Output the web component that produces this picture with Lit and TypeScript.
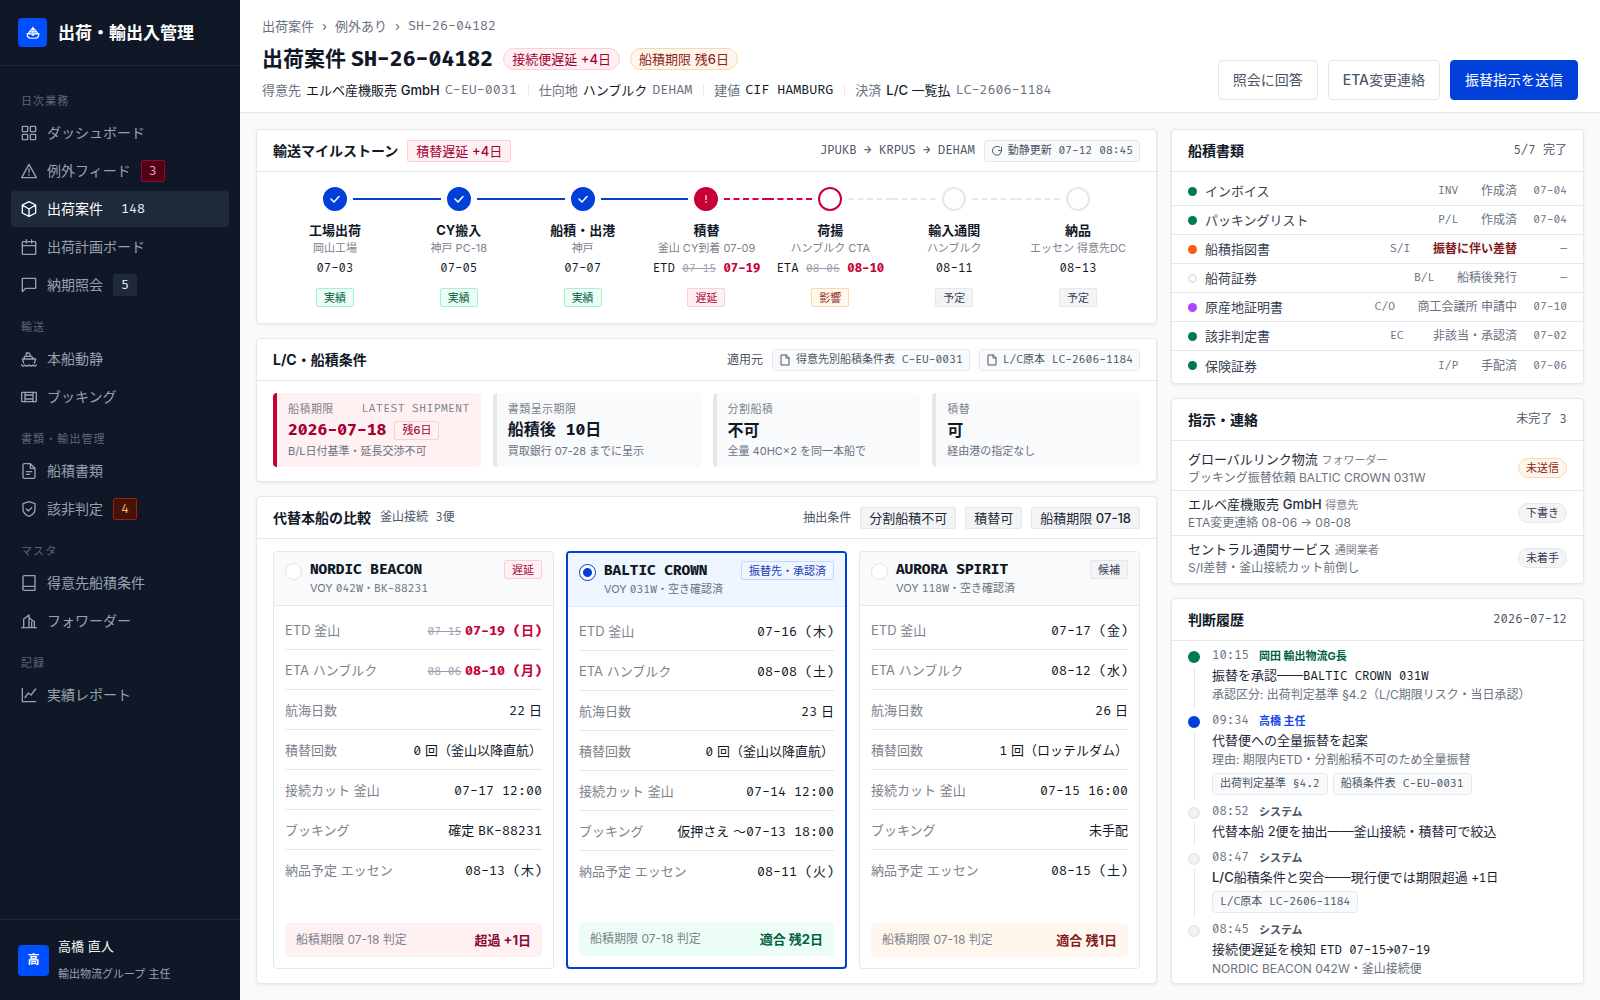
import { LitElement, html, css, svg, nothing, type TemplateResult } from "lit";
import { customElement, state } from "lit/decorators.js";
import { classMap } from "lit/directives/class-map.js";

const icons: Record<string, TemplateResult> = {
  brand: svg`<path d="M12 2v14M12 3 5 11v3M12 3l7 8v3M2 13h6l4 3 4-3h6c0 5-2 8-6 8H8c-4 0-6-3-6-8zM6 10h12"/>`,
  grid: svg`<rect x="2" y="2" width="8" height="8" rx="1"/><rect x="14" y="2" width="8" height="8" rx="1"/><rect x="2" y="14" width="8" height="8" rx="1"/><rect x="14" y="14" width="8" height="8" rx="1"/>`,
  alert: svg`<path d="M12 2 1 22h22zM12 9v5M12 17v1"/>`,
  box: svg`<path d="m12 1 10 5v12l-10 5-10-5V6zM2 6l10 6 10-6M12 12v11"/>`,
  calendar: svg`<rect x="2" y="4" width="20" height="19" rx="1"/><path d="M2 10h20M8 1v5M16 1v5"/>`,
  message: svg`<path d="M22 2H2v20l5-5h15z"/>`,
  ship: svg`<path d="M1 21c2 2 4 2 5 0 2 2 4 2 6 0 2 2 4 2 6 0 1 2 3 2 5 0M4 18l-2-6h20l-2 6M5 12V8h10l5 4M8 8V3h4l3 5"/>`,
  container: svg`<rect x="1" y="5" width="22" height="14" rx="1"/><path d="M6 5v14M18 5v14M6 9h12M6 15h12"/>`,
  file: svg`<path d="M14 1H5a2 2 0 0 0-2 2v18a2 2 0 0 0 2 2h14a2 2 0 0 0 2-2V8zM14 1v7h7M8 13h8M8 17h5"/>`,
  shield: svg`<path d="m12 1 9 3v8c0 5-4 9-9 11-5-2-9-6-9-11V4z"/><path d="m8 12 3 3 5-5"/>`,
  book: svg`<path d="M3 20V3a2 2 0 0 1 2-2h16v22H5a2 2 0 0 1-2-3 2 2 0 0 1 2-3h16"/>`,
  building: svg`<path d="M1 22h22M4 22V9l8-6v19M12 7l8 6v9M16 13v9"/>`,
  chart: svg`<path d="M2 2v20h20M6 16l5-7 4 3 7-9"/>`,
  doc: svg`<path d="M14 2H4v20h16V8zM14 2v6h6"/>`,
  refresh: svg`<path d="M21 4v7h-6"/><path d="M17 4a9 9 0 1 0 4 7"/>`,
  check: svg`<path d="m4 12 6 6L20 7"/>`,
  bang: svg`<path d="M12 4v9M12 19v1"/>`,
};

const icon = (name: string) => html`<svg class="ic" viewBox="0 0 24 24" aria-hidden="true">${icons[name]}</svg>`;

/** Sets the Latin runs of a Japanese string one step heavier than the kana and kanji. */
const mixed = (text: string) =>
  text.split(/([!-~][ -~]*)/).map((part, i) => (i % 2 ? html`<span class="latin">${part}</span>` : part));

const m = (t: string) => html`<span class="mono">${t}</span>`;

const base = css`
  *, *::before, *::after { box-sizing: border-box; }
  :host {
    --sans: Inter, "Noto Sans CJK JP", sans-serif;
    --mono: "Fira Code", "DejaVu Sans Mono", "Noto Sans CJK JP", monospace;
    --ink: #101828;
    --text: #1e2939;
    --sub: #4a5565;
    --muted: #6a7282;
    --faint: #7d828c;
    --line: #e5e7eb;
    --soft: #f9fafb;
    --blue: #003fd8;
    --red: #c70036;
    font-family: var(--sans);
    line-height: 20px;
  }
  h1, h2, h3, p, ul, ol, dl, dd, dt { margin: 0; padding: 0; font-weight: inherit; }
  ul, ol { list-style: none; }
  .mono { font-family: var(--mono); font-variant-ligatures: none; }
  .latin { font-weight: 500; }
  h1 .mono, p .mono, dd .mono, p .role, .date .old, .date .new, .voy .mono { line-height: 1; }
  .ic { width: 16px; height: 16px; flex: none; fill: none; stroke: currentColor; stroke-width: 2; stroke-linecap: round; stroke-linejoin: round; }
  .tag {
    display: inline-flex; align-items: center; height: 19px; padding: 0 7px;
    border: 1px solid var(--line); border-radius: 2px; background: #f3f4f6;
    color: #364153; font-size: 11px; line-height: 16px; white-space: pre;
  }
  .tag.big { height: 22px; padding: 0 8px; font-size: 13px; color: var(--text); }
  .tag.pill { border-radius: 11px; height: 20px; }
  .tag.pill.big { height: 22px; }
  .tag.rose { background: #fff1f2; border-color: #ffccd3; color: #a50036; }
  .tag.orange { background: #fff7ed; border-color: #ffd6a7; color: #8f2420; }
  .tag.green { background: #ecfdf5; border-color: #a4f4cf; color: #006045; }
  .tag.blue { background: #eff6ff; border-color: #bedbff; color: #193cb8; }
  .old { color: #99a1af; text-decoration: line-through; font-size: 11px; font-weight: 400; }
  .new { color: var(--red); font-weight: 700; }
`;

type NavItem = [string, string, string?, string?];
const NAV: [string, NavItem[]][] = [
  ["日次業務", [["grid", "ダッシュボード"], ["alert", "例外フィード", "3", "rose"], ["box", "出荷案件", "148"], ["calendar", "出荷計画ボード"], ["message", "納期照会", "5"]]],
  ["輸送", [["ship", "本船動静"], ["container", "ブッキング"]]],
  ["書類・輸出管理", [["file", "船積書類"], ["shield", "該非判定", "4", "orange"]]],
  ["マスタ", [["book", "得意先船積条件"], ["building", "フォワーダー"]]],
  ["記録", [["chart", "実績レポート"]]],
];

@customElement("side-nav")
export class SideNav extends LitElement {
  static styles = [base, css`
    :host { display: flex; flex-direction: column; background: var(--ink); color: #99a1af; }
    .brand { display: flex; align-items: center; gap: 11px; height: 66px; padding: 0 18px; border-bottom: 1px solid #1e2939; color: #fff; font-size: 17px; font-weight: 700; }
    .mark { display: grid; place-items: center; width: 29px; height: 29px; border-radius: 4px; background: #004fff; }
    .mark .ic { width: 14px; height: 14px; }
    nav { flex: 1; padding: 11px; }
    h2 { padding: 16px 10px 6px; font-size: 11px; line-height: 16px; letter-spacing: 0.1em; color: #5d6676; }
    ul { display: grid; gap: 2px; }
    a { display: flex; align-items: center; gap: 10px; height: 36px; padding: 0 10px; border-radius: 4px; color: inherit; text-decoration: none; font-size: 14px; }
    a.on { background: #1e2939; color: #fff; }
    .count { display: inline-flex; align-items: center; height: 22px; padding: 0 7px; border: 1px solid #1e2939; border-radius: 2px; background: #1e2939; color: #f3f4f6; font-size: 13px; }
    .count.rose { background: #4d0218; border-color: #a50036; color: #ffa1ad; }
    .count.orange { background: #441306; border-color: #9f1d12; color: #ffb86a; }
    .user { display: flex; align-items: center; gap: 9px; height: 81px; padding: 0 18px; border-top: 1px solid #1e2939; }
    .avatar { display: grid; place-items: center; width: 31px; height: 31px; border-radius: 4px; background: #004fff; color: #fff; font-size: 12px; font-weight: 700; }
    .name { color: #f3f4f6; font-size: 13px; line-height: 28px; }
    .role { font-size: 11px; line-height: 28px; }
  `];
  render() {
    return html`
      <div class="brand"><span class="mark">${icon("brand")}</span>出荷・輸出入管理</div>
      <nav aria-label="メイン">
        ${NAV.map(([title, items]) => html`
          <h2>${title}</h2>
          <ul>${items.map(([ic, label, count, tone]) => html`
            <li><a href="#" class=${classMap({ on: label === "出荷案件" })}>${icon(ic)}<span>${label}</span>
              ${count ? html`<span class="count mono ${tone ?? ""}">${count}</span>` : nothing}</a></li>`)}
          </ul>`)}
      </nav>
      <div class="user"><span class="avatar">高</span><div><p class="name">高橋 直人</p><p class="role">輸出物流グループ 主任</p></div></div>`;
  }
}

@customElement("case-header")
export class CaseHeader extends LitElement {
  static styles = [base, css`
    :host { display: flex; align-items: flex-end; justify-content: space-between; gap: 22px; padding: 16px 22px 12px; background: #fff; border-bottom: 1px solid var(--line); box-shadow: 0 1px 0 #f3f4f6; }
    .crumbs { display: flex; gap: 8px; font-size: 13px; color: var(--muted); }
    .crumbs a { color: inherit; text-decoration: none; }
    .title { display: flex; align-items: center; gap: 10px; margin-top: 8px; }
    h1 { font-size: 21px; line-height: 30px; font-weight: 700; color: var(--ink); }
    .meta { display: flex; align-items: center; margin-top: 6px; font-size: 13px; color: var(--muted); }
    .meta div { display: flex; gap: 5px; }
    .meta div + div { margin-left: 11px; }
    .meta div + div::before { content: ""; align-self: center; width: 1px; height: 10px; margin-right: 5px; background: var(--line); }
    .meta b { font-weight: 400; color: var(--ink); white-space: pre; }
    .actions { display: flex; gap: 10px; }
    button { height: 40px; padding: 0 14px; border: 1px solid var(--line); border-radius: 4px; background: #fff; color: var(--sub); font: 400 14px/20px var(--sans); white-space: nowrap; cursor: pointer; }
    button.primary { background: var(--blue); border-color: var(--blue); color: #fff; }
  `];
  render() {
    return html`
      <div>
        <nav class="crumbs" aria-label="パンくず"><a href="#">出荷案件</a><span>›</span><a href="#">例外あり</a><span>›</span>${m("SH-26-04182")}</nav>
        <div class="title"><h1>出荷案件 ${m("SH-26-04182")}</h1><span class="tag pill big rose">${mixed("接続便遅延 +4日")}</span><span class="tag pill big orange">${mixed("船積期限 残6日")}</span></div>
        <div class="meta">
          <div>得意先 <b>${mixed("エルベ産機販売 GmbH")}</b>${m("C-EU-0031")}</div>
          <div>仕向地 <b>ハンブルク</b>${m("DEHAM")}</div>
          <div>建値 <b class="mono">CIF HAMBURG</b></div>
          <div>決済 <b>${mixed("L/C 一覧払")}</b>${m("LC-2606-1184")}</div>
        </div>
      </div>
      <div class="actions"><button>照会に回答</button><button>${mixed("ETA変更連絡")}</button><button class="primary">振替指示を送信</button></div>`;
  }
}

interface Stone { name: string; place: string; label?: string; old?: string; date: string; tag: string; tone: string; kind: string; line?: string }
const STONES: Stone[] = [
  { name: "工場出荷", place: "岡山工場", date: "07-03", tag: "実績", tone: "green", kind: "done", line: "solid" },
  { name: "CY搬入", place: "神戸 PC-18", date: "07-05", tag: "実績", tone: "green", kind: "done", line: "solid" },
  { name: "船積・出港", place: "神戸", date: "07-07", tag: "実績", tone: "green", kind: "done", line: "solid" },
  { name: "積替", place: "釜山 CY到着 07-09", label: "ETD", old: "07-15", date: "07-19", tag: "遅延", tone: "rose", kind: "late", line: "hot" },
  { name: "荷揚", place: "ハンブルク CTA", label: "ETA", old: "08-06", date: "08-10", tag: "影響", tone: "orange", kind: "hit", line: "dash" },
  { name: "輸入通関", place: "ハンブルク", date: "08-11", tag: "予定", tone: "", kind: "plan", line: "dash" },
  { name: "納品", place: "エッセン 得意先DC", date: "08-13", tag: "予定", tone: "", kind: "plan" },
];

interface Vessel { id: string; name: string; voy: string; note: TemplateResult | string; tag: string; tone: string; rows: [string, TemplateResult | string][]; verdict: string; vtone: string }
const late = (a: string, b: string) => html`<span class="old mono">${a}</span> <span class="new mono">${b}</span>`;
const VESSELS: Vessel[] = [
  { id: "nordic", name: "NORDIC BEACON", voy: "042W", note: m("BK-88231"), tag: "遅延", tone: "rose", verdict: "超過 +1日", vtone: "bad",
    rows: [["ETD 釜山", late("07-15", "07-19 (日)")], ["ETA ハンブルク", late("08-06", "08-10 (月)")], ["航海日数", html`${m("22")} 日`], ["積替回数", html`${m("0")} 回（釜山以降直航）`], ["接続カット 釜山", m("07-17 12:00")], ["ブッキング", html`確定 ${m("BK-88231")}`], ["納品予定 エッセン", m("08-13 (木)")]] },
  { id: "baltic", name: "BALTIC CROWN", voy: "031W", note: "空き確認済", tag: "振替先・承認済", tone: "blue", verdict: "適合 残2日", vtone: "good",
    rows: [["ETD 釜山", m("07-16 (木)")], ["ETA ハンブルク", m("08-08 (土)")], ["航海日数", html`${m("23")} 日`], ["積替回数", html`${m("0")} 回（釜山以降直航）`], ["接続カット 釜山", m("07-14 12:00")], ["ブッキング", html`仮押さえ 〜${m("07-13 18:00")}`], ["納品予定 エッセン", m("08-11 (火)")]] },
  { id: "aurora", name: "AURORA SPIRIT", voy: "118W", note: "空き確認済", tag: "候補", tone: "", verdict: "適合 残1日", vtone: "warn",
    rows: [["ETD 釜山", m("07-17 (金)")], ["ETA ハンブルク", m("08-12 (水)")], ["航海日数", html`${m("26")} 日`], ["積替回数", html`${m("1")} 回（ロッテルダム）`], ["接続カット 釜山", m("07-15 16:00")], ["ブッキング", "未手配"], ["納品予定 エッセン", m("08-15 (土)")]] },
];

const DOCS: [string, string, string, string, string][] = [
  ["ok", "インボイス", "INV", "作成済", "07-04"],
  ["ok", "パッキングリスト", "P/L", "作成済", "07-04"],
  ["swap", "船積指図書", "S/I", "振替に伴い差替", "—"],
  ["none", "船荷証券", "B/L", "船積後発行", "—"],
  ["wait", "原産地証明書", "C/O", "商工会議所 申請中", "07-10"],
  ["ok", "該非判定書", "EC", "非該当・承認済", "07-02"],
  ["ok", "保険証券", "I/P", "手配済", "07-06"],
];

const TASKS: [string, string, string, string, string][] = [
  ["グローバルリンク物流", "フォワーダー", "ブッキング振替依頼 BALTIC CROWN 031W", "未送信", "orange"],
  ["エルベ産機販売 GmbH", "得意先", "ETA変更連絡 08-06 → 08-08", "下書き", ""],
  ["セントラル通関サービス", "通関業者", "S/I差替・釜山接続カット前倒し", "未着手", ""],
];

interface Log { time: string; who: string; kind: string; title: TemplateResult | string; sub?: string; refs?: string[] }
const LOGS: Log[] = [
  { time: "10:15", who: "岡田 輸出物流G長", kind: "green", title: html`振替を承認――${m("BALTIC CROWN 031W")}`, sub: "承認区分: 出荷判定基準 §4.2（L/C期限リスク・当日承認）" },
  { time: "09:34", who: "高橋 主任", kind: "blue", title: "代替便への全量振替を起案", sub: "理由: 期限内ETD・分割船積不可のため全量振替", refs: ["出荷判定基準 §4.2", "船積条件表 C-EU-0031"] },
  { time: "08:52", who: "システム", kind: "auto", title: "代替本船 2便を抽出――釜山接続・積替可で絞込" },
  { time: "08:47", who: "システム", kind: "auto", title: html`${mixed("L/C船積条件と突合――現行便では期限超過")} ${m("+1日")}`, refs: ["L/C原本 LC-2606-1184"] },
  { time: "08:45", who: "システム", kind: "auto", title: html`接続便遅延を検知 ${m("ETD 07-15→07-19")}`, sub: "NORDIC BEACON 042W・釜山接続便" },
];

const card = css`
  :host { display: flex; flex-direction: column; border: 1px solid var(--line); border-radius: 4px; background: #fff; box-shadow: 0 1px 3px rgb(16 24 40 / 8%); }
  .head { display: flex; align-items: center; gap: 9px; height: 42px; padding: 0 16px; border-bottom: 1px solid var(--line); font-size: 12px; color: var(--sub); flex: none; }
  .head h2 { font-size: 14px; font-weight: 700; color: var(--ink); }
  .push { margin-left: auto; }
  .chip { display: inline-flex; align-items: center; gap: 5px; height: 22px; padding: 0 7px; border: 1px solid var(--line); border-radius: 4px; background: var(--soft); color: var(--sub); font: 400 11px/16px var(--mono); text-decoration: none; white-space: nowrap; cursor: pointer; }
  .chip .ic { width: 12px; height: 12px; }
  .head .chip { padding: 0 6px; }
`;

@customElement("milestone-card")
export class MilestoneCard extends LitElement {
  static styles = [base, card, css`
    ol { display: grid; grid-template-columns: repeat(7, minmax(0, 1fr)); padding: 15px 16px 16px; }
    li { display: flex; flex-direction: column; align-items: center; white-space: nowrap; }
    .track { display: grid; grid-template-columns: 1fr 24px 1fr; align-items: center; gap: 6px; width: 100%; }
    .rail { height: 0; border-top: 2px none var(--line); }
    .rail.solid { border-top: 2px solid var(--blue); }
    .rail.hot { border-top: 2px dashed #e0003f; }
    .rail.dash { border-top: 2px dashed var(--line); }
    .dot { display: grid; place-items: center; width: 24px; height: 24px; border-radius: 50%; border: 2px solid var(--line); color: #fff; background: #fff; }
    .dot .ic { width: 12px; height: 12px; stroke-width: 3; }
    .dot.done { background: var(--blue); border-color: var(--blue); }
    .dot.late { background: var(--red); border-color: var(--red); }
    .dot.late .ic { width: 10px; height: 10px; }
    .dot.hit { border-color: var(--red); }
    .name { margin-top: 9px; font-size: 13px; font-weight: 700; color: var(--ink); }
    .place { font-size: 11px; line-height: 16px; color: var(--faint); }
    .date { margin: 3px 0 9px; font-size: 12px; color: var(--ink); }
  `];
  render() {
    return html`
      <div class="head"><h2>輸送マイルストーン</h2><span class="tag big rose">${mixed("積替遅延 +4日")}</span>
        <span class="mono push">JPUKB → KRPUS → DEHAM</span><button class="chip">${icon("refresh")}動静更新 07-12 08:45</button></div>
      <ol>${STONES.map((s, i) => html`<li>
        <div class="track"><span class="rail ${STONES[i - 1]?.line ?? ""}"></span>
          <span class="dot ${s.kind}">${s.kind === "done" ? icon("check") : s.kind === "late" ? icon("bang") : nothing}</span>
          <span class="rail ${s.line ?? ""}"></span></div>
        <p class="name">${s.name}</p><p class="place">${s.place}</p>
        <p class="date mono">${s.label ? html`${s.label} <span class="old">${s.old}</span> <span class="new">${s.date}</span>` : s.date}</p>
        <span class="tag ${s.tone}">${s.tag}</span></li>`)}</ol>`;
  }
}

@customElement("terms-card")
export class TermsCard extends LitElement {
  static styles = [base, card, css`
    .terms { display: grid; grid-template-columns: repeat(4, minmax(0, 1fr)); gap: 12px; padding: 12px 16px 14px; }
    .term { padding: 8px 11px; border-left: 4px solid var(--line); border-radius: 4px; background: var(--soft); white-space: nowrap; }
    .term.hot { background: #fff1f2; border-color: var(--red); }
    dt { display: flex; justify-content: space-between; font-size: 11px; line-height: 16px; letter-spacing: 0.04em; color: var(--faint); }
    .value { display: flex; align-items: center; gap: 8px; height: 26px; font-size: 16px; line-height: 26px; font-weight: 700; color: var(--ink); }
    .value .tag { font-weight: 400; }
    .hot .value { color: #a50036; }
    .note { font-size: 11px; line-height: 16px; color: var(--muted); }
  `];
  render() {
    return html`
      <div class="head"><h2>L/C・船積条件</h2><span class="push">適用元</span>
        <a class="chip" href="#">${icon("doc")}得意先別船積条件表 C-EU-0031</a><a class="chip" href="#">${icon("doc")}L/C原本 LC-2606-1184</a></div>
      <dl class="terms">
        <div class="term hot"><dt><span>船積期限</span>${m("LATEST SHIPMENT")}</dt><dd class="value">${m("2026-07-18")}<span class="tag rose">${mixed("残6日")}</span></dd><dd class="note">B/L日付基準・延長交渉不可</dd></div>
        <div class="term"><dt>書類呈示期限</dt><dd class="value mono">船積後 10日</dd><dd class="note">買取銀行 07-28 までに呈示</dd></div>
        <div class="term"><dt>分割船積</dt><dd class="value">不可</dd><dd class="note">全量 40HC×2 を同一本船で</dd></div>
        <div class="term"><dt>積替</dt><dd class="value">可</dd><dd class="note">経由港の指定なし</dd></div>
      </dl>`;
  }
}

@customElement("vessel-card")
export class VesselCard extends LitElement {
  static styles = [base, card, css`
    .options { flex: 1; display: grid; grid-template-columns: repeat(3, minmax(0, 1fr)); gap: 12px; padding: 12px 16px 14px; }
    .option { display: flex; flex-direction: column; border: 1px solid var(--line); border-radius: 4px; overflow: hidden; }
    .option.on { border: 2px solid var(--blue); }
    .top { display: grid; grid-template-columns: 17px 1fr auto; gap: 8px; align-items: start; padding: 8px 11px; border-bottom: 1px solid var(--line); background: var(--soft); }
    .on .top { background: #eff6ff; border-color: #dbeafe; }
    input { appearance: none; width: 17px; height: 17px; margin: 3px 0 0; border: 1px solid #dfe2e6; border-radius: 50%; background: #fff; }
    input:checked { border-color: var(--blue); background: radial-gradient(circle, var(--blue) 4px, #fff 5px); }
    .name { display: block; font-size: 14px; font-weight: 700; color: var(--ink); }
    .voy { display: block; font-size: 11px; line-height: 17px; color: var(--muted); }
    dl { flex: 1; padding: 4px 11px 0; }
    .row { display: flex; align-items: center; justify-content: space-between; height: 40px; border-bottom: 1px solid var(--line); font-size: 13px; white-space: nowrap; }
    .row:last-child { border-bottom: 0; }
    dt { color: var(--faint); }
    dd { color: var(--ink); }
    .verdict { display: flex; align-items: center; justify-content: space-between; height: 34px; margin: 0 11px 11px; padding: 0 11px; border-radius: 4px; font-size: 12px; color: var(--faint); }
    .verdict b { font-size: 13px; }
    .bad { background: #fff1f2; } .bad b { color: #8b0836; }
    .good { background: #ecfdf5; } .good b { color: #006045; }
    .warn { background: #fff7ed; } .warn b { color: #82181a; }
  `];
  @state() private picked = "baltic";
  render() {
    return html`
      <div class="head"><h2>代替本船の比較</h2><span class="mono">釜山接続 3便</span><span class="push">抽出条件</span>
        <span class="tag big">分割船積不可</span><span class="tag big">積替可</span><span class="tag big">${mixed("船積期限 07-18")}</span></div>
      <div class="options">${VESSELS.map((v) => html`
        <section class="option ${classMap({ on: this.picked === v.id })}">
          <label class="top"><input type="radio" name="vessel" .checked=${this.picked === v.id} @change=${() => (this.picked = v.id)}>
            <span><span class="name mono">${v.name}</span><span class="voy">VOY ${m(v.voy)}・${v.note}</span></span>
            <span class="tag ${v.tone}">${v.tag}</span></label>
          <dl>${v.rows.map(([k, val]) => html`<div class="row"><dt>${k}</dt><dd>${val}</dd></div>`)}</dl>
          <p class="verdict ${v.vtone}"><span>船積期限 07-18 判定</span><b>${v.verdict}</b></p>
        </section>`)}</div>`;
  }
}

@customElement("document-card")
export class DocumentCard extends LitElement {
  static styles = [base, card, css`
    ul { padding: 5px 0 3px; }
    li { display: flex; align-items: center; gap: 12px; height: 29px; padding: 0 16px; border-bottom: 1px solid var(--line); font-size: 12px; color: var(--muted); }
    li:last-child { border-bottom: 0; }
    .name { flex: 1; display: flex; align-items: center; gap: 8px; font-size: 13px; color: #364153; }
    .name::before { content: ""; width: 9px; height: 9px; border-radius: 50%; background: #007a55; }
    .swap .name::before { background: #ff5a14; }
    .none .name::before { background: #fff; border: 2px solid var(--line); }
    .wait .name::before { background: #ad46ff; }
    .swap .state { color: #82181a; font-weight: 700; }
    .code { width: 31px; font-size: 11px; }
    .date { width: 38px; font-size: 11px; text-align: right; }
  `];
  render() {
    return html`<div class="head"><h2>船積書類</h2><span class="mono push">5/7 完了</span></div>
      <ul>${DOCS.map(([k, n, c, s, d]) => html`<li class=${k}><span class="name">${n}</span><span class="code mono">${c}</span><span class="state">${s}</span><span class="date mono">${d}</span></li>`)}</ul>`;
  }
}

@customElement("task-card")
export class TaskCard extends LitElement {
  static styles = [base, card, css`
    ul { padding: 5px 0 3px; }
    li { display: flex; align-items: center; justify-content: space-between; padding: 3px 16px; border-bottom: 1px solid var(--line); }
    li:last-child { border-bottom: 0; }
    .who { font-size: 13px; color: var(--text); }
    .role { font-size: 11px; color: var(--faint); }
    .what { font-size: 12px; line-height: 18px; color: var(--muted); }
  `];
  render() {
    return html`<div class="head"><h2>指示・連絡</h2><span class="mono push">未完了 3</span></div>
      <ul>${TASKS.map(([w, r, t, s, tone]) => html`<li><div><p class="who">${mixed(w)} <span class="role">${r}</span></p><p class="what">${t}</p></div><span class="tag pill ${tone}">${s}</span></li>`)}</ul>`;
  }
}

@customElement("history-card")
export class HistoryCard extends LitElement {
  static styles = [base, card, css`
    ol { padding: 6px 16px 0; }
    li { display: grid; grid-template-columns: 12px 1fr; gap: 12px; }
    .spine { display: flex; flex-direction: column; align-items: center; gap: 4px; padding: 4px 0 3px; }
    .spine::before { content: ""; width: 12px; height: 12px; border-radius: 50%; border: 2px solid var(--line); background: #f3f4f6; }
    .spine::after { content: ""; flex: 1; width: 1px; background: var(--line); }
    li:last-child .spine::after { content: none; }
    .green .spine::before { background: #007a55; border-color: #007a55; }
    .blue .spine::before { background: var(--blue); border-color: var(--blue); }
    .body { padding-bottom: 8px; }
    li:last-child .body { padding-bottom: 0; }
    .by { display: flex; gap: 10px; font-size: 11px; line-height: 18px; font-weight: 700; color: var(--sub); }
    .by time { font-size: 12px; line-height: 18px; font-weight: 400; color: var(--muted); }
    .green .by { color: #006045; } .blue .by { color: #1447e6; }
    .title { font-size: 13px; color: var(--text); }
    .title .mono { font-size: 12px; color: var(--ink); }
    .sub { padding-top: 1px; font-size: 12px; line-height: 18px; color: var(--muted); }
    .refs { display: flex; gap: 5px; margin-top: 4px; }
  `];
  render() {
    return html`<div class="head"><h2>判断履歴</h2><span class="mono push">2026-07-12</span></div>
      <ol>${LOGS.map((l) => html`<li class=${l.kind}><span class="spine"></span><div class="body">
        <p class="by"><time class="mono">${l.time}</time>${l.who}</p><p class="title">${l.title}</p>
        ${l.sub ? html`<p class="sub">${l.sub}</p>` : nothing}
        ${l.refs ? html`<p class="refs">${l.refs.map((r) => html`<a class="chip" href="#">${r}</a>`)}</p>` : nothing}
      </div></li>`)}</ol>`;
  }
}

@customElement("app-root")
export class AppRoot extends LitElement {
  static styles = [base, css`
    :host { display: grid; grid-template-columns: 240px minmax(0, 1fr); min-height: 100vh; background: var(--soft); color: var(--text); }
    main { display: flex; flex-direction: column; min-width: 0; }
    .board { flex: 1; display: grid; grid-template-columns: minmax(0, 1fr) 413px; gap: 14px; padding: 16px; }
    .col { display: flex; flex-direction: column; gap: 14px; min-width: 0; }
    .grow { flex: 1; }
  `];
  render() {
    return html`<side-nav></side-nav>
      <main><case-header></case-header>
        <div class="board">
          <div class="col"><milestone-card></milestone-card><terms-card></terms-card><vessel-card class="grow"></vessel-card></div>
          <div class="col"><document-card></document-card><task-card></task-card><history-card class="grow"></history-card></div>
        </div></main>`;
  }
}
